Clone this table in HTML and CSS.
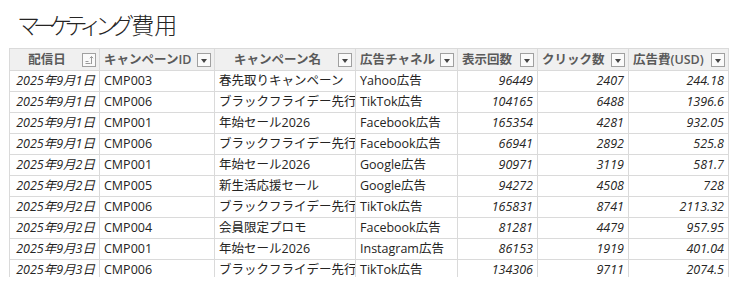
FILE: index.html
```html
<!DOCTYPE html>
<html lang="ja">
<head>
<meta charset="utf-8">
<link rel="stylesheet" href="styles.css">
</head>
<body>
<h1 class="title"><span class="kana">マーケティン</span><span class="kana-last">グ</span>費用</h1>
<div class="grid-wrap">
<table class="grid">
<colgroup>
<col style="width:90px"><col style="width:115px"><col style="width:141px"><col style="width:102px"><col style="width:80px"><col style="width:91px"><col style="width:100px">
</colgroup>
<thead>
<tr>
<th class="center"><span class="hd">配信日</span><span class="btn sort"><svg width="10" height="10" viewBox="0 0 10 10"><path d="M1.5 6.5h3M1.5 8.5h5" stroke="#9a9a9a" stroke-width="1"/><path d="M7.5 9V1.5M5.8 3.2L7.5 1.5l1.7 1.7" stroke="#9a9a9a" stroke-width="1" fill="none"/></svg></span></th>
<th><span class="hd">キャンペーンID</span><span class="btn"><i class="tri"></i></span></th>
<th class="center"><span class="hd">キャンペーン名</span><span class="btn"><i class="tri"></i></span></th>
<th><span class="hd">広告チャネル</span><span class="btn"><i class="tri"></i></span></th>
<th><span class="hd">表示回数</span><span class="btn"><i class="tri"></i></span></th>
<th><span class="hd">クリック数</span><span class="btn"><i class="tri"></i></span></th>
<th><span class="hd">広告費(USD)</span><span class="btn"><i class="tri"></i></span></th>
</tr>
</thead>
<tbody>
<tr><td class="num">2025年9月1日</td><td>CMP003</td><td>春先取りキャンペーン</td><td>Yahoo広告</td><td class="num">96449</td><td class="num">2407</td><td class="num">244.18</td></tr>
<tr><td class="num">2025年9月1日</td><td>CMP006</td><td>ブラックフライデー先行</td><td>TikTok広告</td><td class="num">104165</td><td class="num">6488</td><td class="num">1396.6</td></tr>
<tr><td class="num">2025年9月1日</td><td>CMP001</td><td>年始セール2026</td><td>Facebook広告</td><td class="num">165354</td><td class="num">4281</td><td class="num">932.05</td></tr>
<tr><td class="num">2025年9月1日</td><td>CMP006</td><td>ブラックフライデー先行</td><td>Facebook広告</td><td class="num">66941</td><td class="num">2892</td><td class="num">525.8</td></tr>
<tr><td class="num">2025年9月2日</td><td>CMP001</td><td>年始セール2026</td><td>Google広告</td><td class="num">90971</td><td class="num">3119</td><td class="num">581.7</td></tr>
<tr><td class="num">2025年9月2日</td><td>CMP005</td><td>新生活応援セール</td><td>Google広告</td><td class="num">94272</td><td class="num">4508</td><td class="num">728</td></tr>
<tr><td class="num">2025年9月2日</td><td>CMP006</td><td>ブラックフライデー先行</td><td>TikTok広告</td><td class="num">165831</td><td class="num">8741</td><td class="num">2113.32</td></tr>
<tr><td class="num">2025年9月2日</td><td>CMP004</td><td>会員限定プロモ</td><td>Facebook広告</td><td class="num">81281</td><td class="num">4479</td><td class="num">957.95</td></tr>
<tr><td class="num">2025年9月3日</td><td>CMP001</td><td>年始セール2026</td><td>Instagram広告</td><td class="num">86153</td><td class="num">1919</td><td class="num">401.04</td></tr>
<tr><td class="num">2025年9月3日</td><td>CMP006</td><td>ブラックフライデー先行</td><td>TikTok広告</td><td class="num">134306</td><td class="num">9711</td><td class="num">2074.5</td></tr>
</tbody>
</table>
</div>
</body>
</html>
```
FILE: styles.css
```css
html, body {
  margin: 0;
  padding: 0;
  background: #fff;
}
body {
  font-family: "Open Sans", "Noto Sans CJK JP", sans-serif;
  color: #252423;
}
.title {
  margin: 0;
  padding: 8px 0 0 17px;
  height: 48px;
  box-sizing: border-box;
  font-family: "Noto Sans CJK JP", sans-serif;
  font-size: 23px;
  font-weight: 300;
  line-height: 32px;
  color: #252423;
}
.title .kana {
  letter-spacing: -7px;
}
.title .kana-last {
  letter-spacing: -3px;
}
.grid-wrap {
  margin-left: 9px;
  width: 720px;
  height: 229px;
  overflow: hidden;
}
.grid {
  border-collapse: collapse;
  table-layout: fixed;
  width: 719px;
  font-size: 12.5px;
}
.grid th, .grid td {
  border: 1px solid #dadada;
  height: 20px;
  padding: 0 5px 0 4px;
  white-space: nowrap;
  overflow: hidden;
  line-height: 20px;
}
.grid th {
  background: #f0f0f0;
  color: #5a5a5a;
  font-weight: 600;
  text-align: left;
  height: 21px;
  padding-right: 3px;
  position: relative;
}
.grid th .hd {
  display: inline-block;
}
.grid th.center .hd {
  display: block;
  text-align: center;
  padding-right: 16px;
}
.btn {
  position: absolute;
  right: 3px;
  top: 4px;
  width: 12px;
  height: 12px;
  border: 1px solid #a0a0a0;
  background: #fafafa;
  display: flex;
  align-items: center;
  justify-content: center;
}
.btn .tri {
  width: 0;
  height: 0;
  border-left: 3.5px solid transparent;
  border-right: 3.5px solid transparent;
  border-top: 4px solid #444;
  margin-top: 1px;
}
.grid td {
  color: #252423;
  text-align: left;
}
.grid td.num {
  text-align: right;
  font-style: italic;
  padding-right: 4px;
}
```
